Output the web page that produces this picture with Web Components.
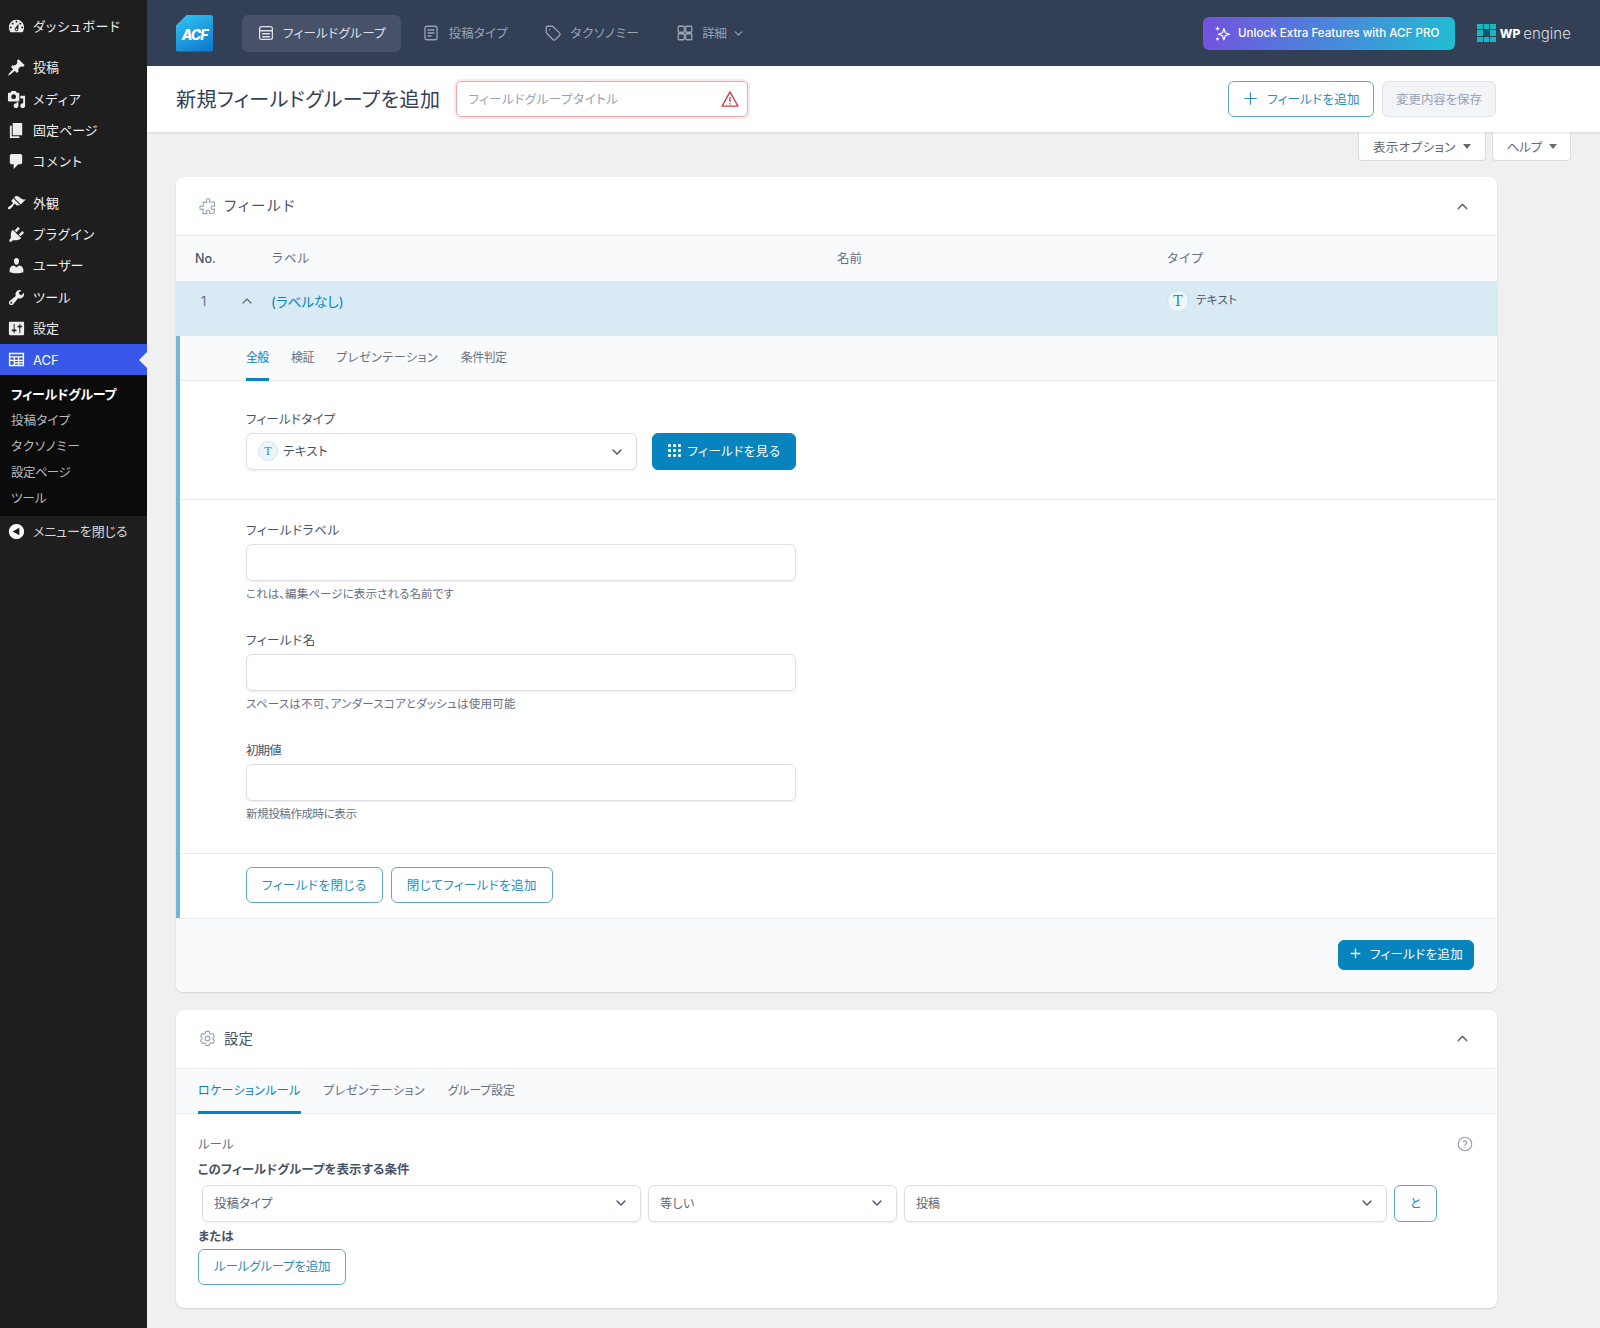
<!DOCTYPE html>
<html lang="ja">
<head>
<meta charset="utf-8">
<title>新規フィールドグループを追加</title>
<style>
  html, body { margin: 0; padding: 0; background: #f0f0f0; }
  body {
    font-family: "Inter", "Noto Sans CJK JP", sans-serif;
    font-size: 13px;
    font-feature-settings: "palt";
    color: #344054;
    height: 1328px;
    overflow: hidden;
  }
</style>
</head>
<body>
<wp-page>
  <wp-sidebar slot="side"></wp-sidebar>

  <acf-topbar></acf-topbar>
  <acf-titlebar></acf-titlebar>
  <screen-meta></screen-meta>

  <acf-card icon="puzzle" heading="フィールド" ls="2">
    <field-table></field-table>
  </acf-card>

  <acf-card icon="gear" heading="設定" class="second">
    <settings-panel></settings-panel>
  </acf-card>
</wp-page>

<script>
const ICONS = {
  dashboard: 'M3.76 16h12.48c1.1-1.37 1.76-3.11 1.76-5 0-4.42-3.58-8-8-8s-8 3.58-8 8c0 1.89.66 3.63 1.76 5zM10 4c.55 0 1 .45 1 1s-.45 1-1 1-1-.45-1-1 .45-1 1-1zM6 6c.55 0 1 .45 1 1s-.45 1-1 1-1-.45-1-1 .45-1 1-1zm8 0c.55 0 1 .45 1 1s-.45 1-1 1-1-.45-1-1 .45-1 1-1zm-5.37 5.55L12 7v6c0 1.1-.9 2-2 2s-2-.9-2-2c0-.57.24-1.08.63-1.45zM4 10c.55 0 1 .45 1 1s-.45 1-1 1-1-.45-1-1 .45-1 1-1zm12 0c.55 0 1 .45 1 1s-.45 1-1 1-1-.45-1-1 .45-1 1-1zm-5 3c0-.55-.45-1-1-1s-1 .45-1 1 .45 1 1 1 1-.45 1-1z',
  post: 'M10.44 3.02l1.82-1.82 6.36 6.35-1.83 1.82c-1.05-.68-2.48-.57-3.41.36l-.75.75c-.92.93-1.04 2.35-.35 3.41l-1.83 1.82-2.41-2.41-2.8 2.79c-.42.42-3.38 2.71-3.8 2.29s1.86-3.39 2.28-3.81l2.79-2.79L4.1 9.36l1.83-1.82c1.05.69 2.48.57 3.4-.36l.75-.75c.93-.92 1.05-2.35.36-3.41z',
  media: 'M13 11V4c0-.55-.45-1-1-1h-1.67L9 1H5L3.67 3H2c-.55 0-1 .45-1 1v7c0 .55.45 1 1 1h10c.55 0 1-.45 1-1zM7 4.5c1.38 0 2.5 1.12 2.5 2.5S8.38 9.5 7 9.5 4.5 8.38 4.5 7 5.62 4.5 7 4.5zM14 6h5v10.5c0 1.38-1.12 2.5-2.5 2.5S14 17.88 14 16.5s1.12-2.5 2.5-2.5c.17 0 .34.02.5.05V9h-3V6zm-4 8.05V13h2v3.5c0 1.38-1.12 2.5-2.5 2.5S7 17.88 7 16.5 8.12 14 9.5 14c.17 0 .34.02.5.05z',
  page: 'M6 15V2h10v13H6zm-1 1h8v2H3V5h2v11z',
  comment: 'M5 2h9c1.1 0 2 .9 2 2v7c0 1.1-.9 2-2 2h-2l-5 5v-5H5c-1.1 0-2-.9-2-2V4c0-1.1.9-2 2-2z',
  brush: 'M14.48 11.06L7.41 3.99l1.5-1.5c.5-.56 2.3-.47 3.51.32 1.21.8 1.43 1.28 2.91 2.1 1.18.64 2.45 1.26 4.45.85zm-.71.71L6.7 4.7 4.93 6.47c-.39.39-.39 1.02 0 1.41l1.06 1.06c.39.39.39 1.03 0 1.42-.6.6-1.43 1.11-2.21 1.69-.35.26-.7.53-1.01.84C1.43 13.23.4 14.91 1.2 15.7c.79.8 2.47-.23 3.83-1.59.31-.31.58-.66.85-1.02.57-.78 1.08-1.61 1.69-2.21.39-.39 1.02-.39 1.41 0l1.06 1.06c.39.39 1.02.39 1.41 0z',
  plugin: 'M13.11 4.36L9.87 7.6 8 5.73l3.24-3.24c.35-.34 1.05-.2 1.56.32.52.51.66 1.21.31 1.55zm-8 1.77l.91-1.12 9.01 9.01-1.19.84c-.71.71-2.63 1.16-3.82 1.16H6.14L4.9 17.26c-.59.59-1.54.59-2.12 0-.59-.58-.59-1.53 0-2.12l1.24-1.24v-3.88c0-1.13.4-3.19 1.09-3.89zm7.26 3.97l3.24-3.24c.34-.35 1.04-.21 1.55.31.52.51.66 1.21.31 1.55l-3.24 3.25z',
  user: 'M10 9.25c-2.27 0-2.73-3.44-2.73-3.44C7 4.02 7.82 2 9.97 2c2.16 0 2.98 2.02 2.71 3.81 0 0-.41 3.44-2.68 3.44zm0 2.57L12.72 10c2.39 0 4.52 2.33 4.52 4.53v2.49s-3.65 1.13-7.24 1.13c-3.65 0-7.24-1.13-7.24-1.13v-2.49c0-2.25 1.94-4.48 4.47-4.48z',
  tools: 'M16.68 9.77c-1.34 1.34-3.3 1.67-4.95.99l-5.41 6.52c-.99.99-2.59.99-3.58 0s-.99-2.59 0-3.57l6.52-5.42c-.68-1.65-.35-3.61.99-4.95 1.28-1.28 3.12-1.62 4.72-1.06l-2.89 2.89 2.82 2.82 2.86-2.87c.53 1.58.18 3.39-1.08 4.65zM3.81 16.21c.4.39 1.04.39 1.43 0 .4-.4.4-1.04 0-1.43-.39-.4-1.03-.4-1.43 0-.39.39-.39 1.03 0 1.43z',
  settings: 'M18 16V4c0-.55-.45-1-1-1H3c-.55 0-1 .45-1 1v12c0 .55.45 1 1 1h14c.55 0 1-.45 1-1zM8 11h1c.55 0 1 .45 1 1s-.45 1-1 1H8v1.5c0 .28-.22.5-.5.5s-.5-.22-.5-.5V13H6c-.55 0-1-.45-1-1s.45-1 1-1h1V5.5c0-.28.22-.5.5-.5s.5.22.5.5V11zm5-2h-1c-.55 0-1-.45-1-1s.45-1 1-1h1V5.5c0-.28.22-.5.5-.5s.5.22.5.5V7h1c.55 0 1 .45 1 1s-.45 1-1 1h-1v5.5c0 .28-.22.5-.5.5s-.5-.22-.5-.5V9z',
  table: 'M2 3h16v14H2zM3.5 4.5v2.2h13V4.5zM3.5 8v2.2h3.6V8zM8.4 8v2.2h3.2V8zM12.9 8v2.2h3.6V8zM3.5 11.5v4h3.6v-4zM8.4 11.5v1.4h3.2v-1.4zM8.4 14.1v1.4h3.2v-1.4zM12.9 11.5v1.4h3.6v-1.4zM12.9 14.1v1.4h3.6v-1.4z',
  collapse: 'M18 10c0-4.42-3.58-8-8-8s-8 3.58-8 8 3.58 8 8 8 8-3.58 8-8zm-5 4l-7-4 7-4v8z'
};

// stroke icons on a 24 box
const LINES = {
  puzzle: 'M14.25 6.087c0-.355.186-.676.401-.959.221-.29.349-.634.349-1.003 0-1.036-1.007-1.875-2.25-1.875s-2.25.84-2.25 1.875c0 .369.128.713.349 1.003.215.283.401.604.401.959a.64.64 0 01-.657.643 48.39 48.39 0 01-4.163-.3c.186 1.613.293 3.25.315 4.907a.656.656 0 01-.658.663c-.355 0-.676-.186-.959-.401a1.647 1.647 0 00-1.003-.349c-1.036 0-1.875 1.007-1.875 2.25s.84 2.25 1.875 2.25c.369 0 .713-.128 1.003-.349.283-.215.604-.401.959-.401.31 0 .555.26.532.57a48.039 48.039 0 01-.642 5.056c1.518.19 3.058.309 4.616.354a.64.64 0 00.657-.643c0-.355-.186-.676-.401-.959a1.647 1.647 0 01-.349-1.003c0-1.035 1.008-1.875 2.25-1.875 1.243 0 2.25.84 2.25 1.875 0 .369-.128.713-.349 1.003-.215.283-.4.604-.4.959 0 .333.277.599.61.58a48.1 48.1 0 005.427-.63 48.05 48.05 0 00.582-4.717.532.532 0 00-.533-.57c-.355 0-.676.186-.959.401-.29.221-.634.349-1.003.349-1.035 0-1.875-1.007-1.875-2.25s.84-2.25 1.875-2.25c.37 0 .713.128 1.003.349.283.215.604.401.96.401a.656.656 0 00.658-.663 48.422 48.422 0 00-.37-5.36c-1.886.342-3.81.574-5.766.689a.578.578 0 01-.61-.58z',
  gear: 'M9.594 3.94c.09-.542.56-.94 1.11-.94h2.593c.55 0 1.02.398 1.11.94l.213 1.281c.063.374.313.686.645.87.074.04.147.083.22.127.324.196.72.257 1.075.124l1.217-.456a1.125 1.125 0 011.37.49l1.296 2.247a1.125 1.125 0 01-.26 1.431l-1.003.827c-.293.24-.438.613-.431.992a6.759 6.759 0 010 .255c-.007.378.138.75.43.99l1.005.828c.424.35.534.954.26 1.43l-1.298 2.247a1.125 1.125 0 01-1.369.491l-1.217-.456c-.355-.133-.75-.072-1.076.124a6.57 6.57 0 01-.22.128c-.331.183-.581.495-.644.869l-.213 1.28c-.09.543-.56.941-1.11.941h-2.594c-.55 0-1.02-.398-1.11-.94l-.213-1.281c-.062-.374-.312-.686-.644-.87a6.52 6.52 0 01-.22-.127c-.325-.196-.72-.257-1.076-.124l-1.217.456a1.125 1.125 0 01-1.369-.49l-1.297-2.247a1.125 1.125 0 01.26-1.431l1.004-.827c.292-.24.437-.613.43-.992a6.932 6.932 0 010-.255c.007-.378-.138-.75-.43-.99l-1.004-.828a1.125 1.125 0 01-.26-1.43l1.297-2.247a1.125 1.125 0 011.37-.491l1.216.456c.356.133.751.072 1.076-.124.072-.044.146-.087.22-.128.332-.183.582-.495.644-.869l.214-1.281zM15 12a3 3 0 11-6 0 3 3 0 016 0z',
  groups: 'M6 3.5h12A2.5 2.5 0 0120.5 6v12a2.5 2.5 0 01-2.5 2.5H6A2.5 2.5 0 013.5 18V6A2.5 2.5 0 016 3.5zM3.5 9h17M7.5 13h9M7.5 17h9',
  doc: 'M6.5 3h11A2.5 2.5 0 0120 5.5v13a2.5 2.5 0 01-2.5 2.5h-11A2.5 2.5 0 014 18.5v-13A2.5 2.5 0 016.5 3zM8 8h8M8 12h8M8 16h4',
  tag: 'M3 4.5A1.5 1.5 0 014.5 3h6.4c.5 0 1 .2 1.4.6l8.6 8.6a2 2 0 010 2.8l-5.9 5.9a2 2 0 01-2.8 0l-8.6-8.6c-.4-.4-.6-.9-.6-1.4zM7.5 7.5h.01',
  grid: 'M4 3h6a1 1 0 011 1v6a1 1 0 01-1 1H4a1 1 0 01-1-1V4a1 1 0 011-1zM14 3h6a1 1 0 011 1v6a1 1 0 01-1 1h-6a1 1 0 01-1-1V4a1 1 0 011-1zM4 13h6a1 1 0 011 1v6a1 1 0 01-1 1H4a1 1 0 01-1-1v-6a1 1 0 011-1zM14 13h6a1 1 0 011 1v6a1 1 0 01-1 1h-6a1 1 0 01-1-1v-6a1 1 0 011-1z',
  down: 'M6 9l6 6 6-6',
  up: 'M6 15l6-6 6 6',
  plus: 'M12 4v16M4 12h16',
  warn: 'M12 3.5L2.5 20.5h19zM12 10v5M12 17.6v.4',
  help: 'M12 21a9 9 0 100-18 9 9 0 000 18zM9.6 9.5a2.5 2.5 0 014.8.8c0 1.6-2.4 2-2.4 3.4M12 16.8v.2',
  spark: 'M14 5l2 6 6 2-6 2-2 6-2-6-6-2 6-2zM5 3v4M3 5h4M5 18v3M3.5 19.5h3'
};

class WpIcon extends HTMLElement {
  connectedCallback() {
    const name = this.getAttribute('name');
    const size = this.getAttribute('size') || 20;
    const sw = this.getAttribute('weight') || 1.7;
    const body = LINES[name]
      ? `<svg viewBox="0 0 24 24" width="${size}" height="${size}" fill="none" stroke="currentColor" stroke-width="${sw}" stroke-linecap="round" stroke-linejoin="round"><path d="${LINES[name]}"/></svg>`
      : `<svg viewBox="0 0 20 20" width="${size}" height="${size}" fill="currentColor"><path fill-rule="evenodd" d="${ICONS[name]}"/></svg>`;
    this.attachShadow({ mode: 'open' }).innerHTML = `
      <style>
        :host { display: inline-flex; flex: none; line-height: 0; }
      </style>${body}`;
  }
}
customElements.define('wp-icon', WpIcon);

class WpPage extends HTMLElement {
  constructor() {
    super();
    this.attachShadow({ mode: 'open' }).innerHTML = `
      <style>
        :host { display: flex; align-items: stretch; height: 1328px; }
        .side { flex: 0 0 147px; background: #1e1e1e; }
        main { flex: 1; min-width: 0; }
      </style>
      <div class="side"><slot name="side"></slot></div>
      <main><slot></slot></main>`;
  }
}
customElements.define('wp-page', WpPage);

class WpSidebar extends HTMLElement {
  connectedCallback() {
    const item = (icon, text, ls = 0) => `
      <a class="item"><wp-icon name="${icon}" size="19"></wp-icon><span style="letter-spacing:${ls}px">${text}</span></a>`;
    this.attachShadow({ mode: 'open' }).innerHTML = `
      <style>
        :host { display: block; padding-top: 10.5px; color: #eceded; }
        .group { margin-bottom: 10.5px; }
        .item {
          display: flex; align-items: center; height: 31.25px;
          padding-left: 7px; gap: 7px; font-size: 13px; position: relative;
        }
        .item span { padding-bottom: 2px; }
        .current { background: #3858e9; color: #fff; }
        .current span { padding-bottom: 0; }
        .current::after {
          content: ""; position: absolute; right: 0; top: 50%; margin-top: -8px;
          border: 8px solid transparent; border-right-color: #f0f0f0; border-left: 0;
        }
        .sub { background: #0b0b0b; padding: 6px 0 3px; margin-bottom: 0; color: #b9bbbd; font-size: 12.5px; }
        .sub div { height: 26.25px; line-height: 26.25px; padding-left: 11px; }
        .sub .on { color: #fff; font-weight: 700; font-size: 13px; letter-spacing: -.2px; }
        .collapse { color: #d6d7d8; }
        .collapse span { padding-bottom: 1px; }
        .collapse wp-icon { color: #fff; }
      </style>
      <div class="group">${item('dashboard', 'ダッシュボード', 1)}</div>
      <div class="group">
        ${item('post', '投稿')}${item('media', 'メディア', 1)}${item('page', '固定ページ')}${item('comment', 'コメント', 1.2)}
      </div>
      <div>
        ${item('brush', '外観')}${item('plugin', 'プラグイン', .8)}${item('user', 'ユーザー')}${item('tools', 'ツール', .3)}${item('settings', '設定')}
        <a class="item current"><wp-icon name="table" size="19"></wp-icon><span>ACF</span></a>
      </div>
      <div class="sub">
        <div class="on">フィールドグループ</div>
        <div style="letter-spacing:.2px">投稿タイプ</div>
        <div style="letter-spacing:.85px">タクソノミー</div>
        <div style="letter-spacing:-.6px">設定ページ</div>
        <div>ツール</div>
      </div>
      <div class="collapse">${item('collapse', 'メニューを閉じる', -.1)}</div>`;
  }
}
customElements.define('wp-sidebar', WpSidebar);

class AcfTopbar extends HTMLElement {
  constructor() {
    super();
    this.attachShadow({ mode: 'open' }).innerHTML = `
      <style>
        :host {
          display: flex; align-items: center; height: 66px; background: #333f55;
          padding: 0 30px 0 29px; box-sizing: border-box;
        }
        .logo {
          width: 37px; height: 37px; box-sizing: border-box; margin-right: 29px;
          background: linear-gradient(150deg, #33c6f2, #0b74cc);
          clip-path: polygon(30% 0, 100% 0, 100% 100%, 0 100%, 0 30%);
          border-radius: 2px;
          color: #fff; font: italic 800 14px "Inter", sans-serif; letter-spacing: -1px;
          display: flex; align-items: center; justify-content: center; padding-top: 3px;
        }
        nav { display: flex; align-items: center; gap: 6.5px; flex: 1; }
        .tab {
          display: flex; align-items: center; gap: 8px; height: 37px; padding: 0 15px;
          border-radius: 6px; color: #99a3b3; font-size: 12.5px;
        }
        .tab span { padding-bottom: 2px; }
        .tab.on { background: #475268; color: #dde1e7; }
        .more { margin-left: -3px; }
        .pro {
          display: flex; align-items: center; gap: 7px; width: 252px; height: 33px;
          box-sizing: border-box; padding-left: 11px; border-radius: 6px; color: #fff;
          font-size: 11.6px; font-weight: 500; margin-right: 22px;
          background: linear-gradient(110deg, #7550e0 0%, #4a86db 50%, #1fbfd2 100%);
        }
        .wpe { display: flex; align-items: center; color: #fff; width: 93px; }
        .tiles {
          display: grid; grid-template-columns: repeat(3, 5.6px); grid-auto-rows: 5.6px; gap: 1px;
          margin-right: 4px;
        }
        .tiles i { background: #19b7c4; }
        .tiles i.c { background: #0f5a68; }
        .wp { font: 800 12px "Inter", sans-serif; letter-spacing: 0; margin-right: 3px; }
        .en { font: 300 15px "Inter", sans-serif; color: #d8dce2; letter-spacing: 0; }
      </style>
      <div class="logo">ACF</div>
      <nav>
        <div class="tab on"><wp-icon name="groups" size="18"></wp-icon><span style="letter-spacing:.35px">フィールドグループ</span></div>
        <div class="tab"><wp-icon name="doc" size="18"></wp-icon><span style="letter-spacing:.2px">投稿タイプ</span></div>
        <div class="tab"><wp-icon name="tag" size="18"></wp-icon><span style="letter-spacing:.8px">タクソノミー</span></div>
        <div class="tab"><wp-icon name="grid" size="18"></wp-icon><span style="letter-spacing:-.4px">詳細</span><wp-icon class="more" name="down" size="13" weight="2"></wp-icon></div>
      </nav>
      <div class="pro"><wp-icon name="spark" size="17"></wp-icon><span>Unlock Extra Features with ACF PRO</span></div>
      <div class="wpe">
        <div class="tiles"><i></i><i></i><i></i><i></i><i class="c"></i><i></i><i></i><i></i><i></i></div>
        <span class="wp">WP</span><span class="en">engine</span>
      </div>`;
  }
}
customElements.define('acf-topbar', AcfTopbar);

class AcfButton extends HTMLElement {
  constructor() {
    super();
    this.attachShadow({ mode: 'open' }).innerHTML = `
      <style>
        :host {
          display: inline-flex; align-items: center; justify-content: center; gap: 8px;
          height: 36px; box-sizing: border-box; padding: 0 15px 2px; border-radius: 6px;
          border: 1px solid #5fa8cd; background: #fff; color: #2a8bbd; font-size: 12.5px;
          white-space: nowrap; flex: none;
        }
        :host([kind="primary"]) { background: #0783be; border-color: #0783be; color: #fff; }
        :host([kind="off"]) { background: #f2f4f7; border-color: #dfe2e8; color: #98a2b3; }
      </style>
      <slot></slot>`;
  }
}
customElements.define('acf-button', AcfButton);

class AcfTitlebar extends HTMLElement {
  constructor() {
    super();
    this.attachShadow({ mode: 'open' }).innerHTML = `
      <style>
        :host {
          display: flex; align-items: center; height: 66px; box-sizing: border-box;
          background: #fff; padding: 0 104px 0 29px; box-shadow: 0 1px 2px rgba(16,24,40,.12);
          position: relative;
        }
        h1 { margin: 0 16px 2px 0; font-size: 20px; font-weight: 400; color: #344054; white-space: nowrap; letter-spacing: .44px; }
        .title {
          display: flex; align-items: center; justify-content: space-between;
          width: 292px; height: 36px; box-sizing: border-box; padding: 0 7px 0 11px;
          border: 1px solid #eba9ab; border-radius: 5px; box-shadow: 0 0 0 2px #fce9e9;
          color: #98a2b3; font-size: 12.5px;
        }
        .title span { letter-spacing: .55px; padding-bottom: 2px; }
        .warn { color: #c9434e; }
        .end { margin-left: auto; display: flex; gap: 8px; }
        .add { width: 146px; padding: 0 0 2px; gap: 8px; letter-spacing: .3px; }
        .save { width: 114px; padding: 0 0 2px; letter-spacing: -.1px; }
      </style>
      <h1>新規フィールドグループを追加</h1>
      <div class="title"><span>フィールドグループタイトル</span><wp-icon class="warn" name="warn" size="20"></wp-icon></div>
      <div class="end">
        <acf-button class="add"><wp-icon name="plus" size="17"></wp-icon>フィールドを追加</acf-button>
        <acf-button class="save" kind="off">変更内容を保存</acf-button>
      </div>`;
  }
}
customElements.define('acf-titlebar', AcfTitlebar);

class ScreenMeta extends HTMLElement {
  constructor() {
    super();
    this.attachShadow({ mode: 'open' }).innerHTML = `
      <style>
        :host { display: flex; justify-content: flex-end; gap: 6px; height: 29px; padding-right: 29px; }
        div {
          display: flex; align-items: center; gap: 7px; box-sizing: border-box; padding: 0 14px;
          height: 29px; background: #fff; border: 1px solid #dcdcde; border-top: 0;
          border-radius: 0 0 4px 4px; color: #646970; font-size: 12.5px;
        }
        .opt { letter-spacing: .4px; }
        .hlp { padding: 0 13px 0 14px; letter-spacing: -.2px; }
        i { width: 0; height: 0; border: 4px solid transparent; border-top: 5px solid #646970; border-bottom: 0; }
      </style>
      <div class="opt">表示オプション<i></i></div>
      <div class="hlp">ヘルプ<i></i></div>`;
  }
}
customElements.define('screen-meta', ScreenMeta);

class AcfCard extends HTMLElement {
  connectedCallback() {
    this.attachShadow({ mode: 'open' }).innerHTML = `
      <style>
        :host {
          display: block; margin: 16px 103px 0 29px; background: #fff; border-radius: 8px;
          box-shadow: 0 1px 2px rgba(16,24,40,.14); overflow: hidden;
        }
        :host(.second) { margin-top: 17.5px; }
        header {
          display: flex; align-items: center; height: 58px; padding: 0 26px 0 22px; gap: 7px;
          border-bottom: 1px solid #eaecf0; color: #475467; font-size: 14.5px;
        }
        .ttl { padding-bottom: 3px; letter-spacing: ${this.getAttribute('ls') || 0}px; }
        .ic { color: #98a2b3; }
        .chev { margin-left: auto; color: #667085; }
      </style>
      <header>
        <wp-icon class="ic" name="${this.getAttribute('icon')}" size="19" weight="1.4"></wp-icon>
        <span class="ttl">${this.getAttribute('heading')}</span>
        <wp-icon class="chev" name="up" size="17" weight="2"></wp-icon>
      </header>
      <slot></slot>`;
  }
}
customElements.define('acf-card', AcfCard);

class AcfTabs extends HTMLElement {
  connectedCallback() {
    // items: name or name~letterspacing, split by |
    const names = this.getAttribute('items').split('|').map((s) => s.split('~'));
    this.attachShadow({ mode: 'open' }).innerHTML = `
      <style>
        :host {
          display: flex; gap: 22.5px; height: 45px; box-sizing: border-box; background: #f9fafb;
          border-bottom: 1px solid #eaecf0; font-size: 12px; color: #667085;
        }
        span { display: flex; align-items: center; height: 45px; box-sizing: border-box; border-bottom: 3px solid transparent; padding-bottom: 1px; }
        .on { color: #0783be; border-bottom-color: #0783be; }
      </style>
      ${names.map(([n, ls], i) => `<span class="${i === 0 ? 'on' : ''}" style="letter-spacing:${ls || 0}px">${n}</span>`).join('')}`;
  }
}
customElements.define('acf-tabs', AcfTabs);

class AcfSelect extends HTMLElement {
  constructor() {
    super();
    this.attachShadow({ mode: 'open' }).innerHTML = `
      <style>
        :host {
          display: flex; align-items: center; justify-content: space-between; height: 37px;
          box-sizing: border-box; padding: 0 11px 0 11px; background: #fff; border-radius: 6px;
          border: 1px solid #dcdfe5; box-shadow: 0 1px 2px rgba(16,24,40,.08);
          color: #475467; font-size: 12.5px;
        }
        span { padding-bottom: 2px; }
        wp-icon { color: #475467; }
      </style>
      <span><slot></slot></span>
      <wp-icon name="down" size="16" weight="2"></wp-icon>`;
  }
}
customElements.define('acf-select', AcfSelect);

class TypeBadge extends HTMLElement {
  constructor() {
    super();
    this.attachShadow({ mode: 'open' }).innerHTML = `
      <style>
        :host {
          display: inline-flex; align-items: center; justify-content: center; flex: none;
          width: 20px; height: 20px; box-sizing: border-box; border-radius: 50%;
          background: #ebf5fa; border: 1px solid #cfe3ee; color: #2a8bbd;
          font: 12px/1 "Liberation Serif", serif;
        }
      </style>T`;
  }
}
customElements.define('type-badge', TypeBadge);

class AcfField extends HTMLElement {
  connectedCallback() {
    this.attachShadow({ mode: 'open' }).innerHTML = `
      <style>
        :host { display: block; width: 550px; }
        label {
          display: block; line-height: 16px; font-size: 12.5px; color: #475467; margin-bottom: 5px;
          letter-spacing: ${this.getAttribute('ls1') || 0}px;
        }
        .input {
          height: 37px; box-sizing: border-box; border: 1px solid #dcdfe5; border-radius: 6px;
          background: #fff; box-shadow: 0 1px 2px rgba(16,24,40,.08);
        }
        small {
          display: block; line-height: 16px; margin-top: 5.5px; font-size: 11.5px; color: #667085;
          letter-spacing: ${this.getAttribute('ls2') || 0}px;
        }
      </style>
      <label>${this.getAttribute('label')}</label>
      <div class="input"></div>
      <small>${this.getAttribute('hint')}</small>`;
  }
}
customElements.define('acf-field', AcfField);

class FieldTable extends HTMLElement {
  constructor() {
    super();
    this.attachShadow({ mode: 'open' }).innerHTML = `
      <style>
        :host { display: block; }
        .cols { display: grid; grid-template-columns: 76px 566px 330px 1fr; padding-left: 19px; }
        .head { height: 45px; align-items: center; background: #f9fafb; color: #667085; font-size: 12.5px; }
        .head b { font-weight: 500; color: #475467; }
        .head span { padding-bottom: 2px; }
        .head .l { letter-spacing: 1px; margin-left: 1px; }
        .head .t { letter-spacing: 1.3px; }
        .row { height: 55px; background: #d8eaf4; align-items: start; padding-top: 10px; box-sizing: border-box; }
        .row > div { display: flex; align-items: center; height: 20px; }
        .num { justify-content: flex-start; color: #667085; gap: 33px; padding-left: 6px; position: relative; }
        .num wp-icon { color: #667085; }
        .lab { color: #0783be; font-size: 13.5px; padding-bottom: 6px; }
        .typ { gap: 7px; font-size: 11.5px; color: #475467; }
        .typ span { padding-bottom: 4px; letter-spacing: .3px; }
        .typ type-badge { width: 22px; height: 22px; font-size: 16px; background: #edf6fb; }
        .body { border-left: 4px solid #72b7d9; }
        .tabs { padding-left: 66px; }
        .sec { padding-left: 66px; border-bottom: 1px solid #eaecf0; }
        .s1 { padding-top: 31px; padding-bottom: 29px; }
        .s1 label { display: block; line-height: 16px; font-size: 12.5px; color: #475467; margin-bottom: 5px; letter-spacing: .3px; }
        .line { display: flex; gap: 15px; }
        .line acf-select { width: 391px; box-sizing: border-box; }
        .inner { display: flex; align-items: center; gap: 5px; letter-spacing: .4px; }
        .browse { width: 144px; height: 37px; padding: 0 0 2px; gap: 7px; letter-spacing: .5px; }
        .s2 { padding-top: 22.5px; padding-bottom: 31px; display: flex; flex-direction: column; gap: 30.5px; }
        .s3 { padding-top: 13px; padding-bottom: 15px; display: flex; gap: 8px; border-bottom: 0; }
        .c1 { letter-spacing: .55px; }
        .c2 { letter-spacing: .45px; }
        .foot {
          height: 74px; box-sizing: border-box; background: #f9fafb; border-top: 1px solid #eaecf0;
          display: flex; justify-content: flex-end; padding: 20.5px 23px 0 0;
        }
        .foot acf-button { height: 30px; width: 136px; padding: 0 0 2px; letter-spacing: .35px; }
        .dots { display: grid; grid-template-columns: repeat(3, 3px); grid-auto-rows: 3px; gap: 2px; }
        .dots i { background: #fff; border-radius: 1px; }
      </style>
      <div class="cols head"><b>No.</b><span class="l">ラベル</span><span>名前</span><span class="t">タイプ</span></div>
      <div class="cols row">
        <div class="num">1<wp-icon name="up" size="16" weight="2"></wp-icon></div>
        <div class="lab">(ラベルなし)</div>
        <div></div>
        <div class="typ"><type-badge></type-badge><span>テキスト</span></div>
      </div>
      <div class="body">
        <acf-tabs class="tabs" items="全般~-.7|検証~-.7|プレゼンテーション~.55|条件判定~-.6"></acf-tabs>
        <div class="sec s1">
          <label>フィールドタイプ</label>
          <div class="line">
            <acf-select><span class="inner"><type-badge></type-badge>テキスト</span></acf-select>
            <acf-button class="browse" kind="primary"><span class="dots"><i></i><i></i><i></i><i></i><i></i><i></i><i></i><i></i><i></i></span>フィールドを見る</acf-button>
          </div>
        </div>
        <div class="sec s2">
          <acf-field label="フィールドラベル" ls1=".6" ls2=".1" hint="これは、編集ページに表示される名前です"></acf-field>
          <acf-field label="フィールド名" ls1=".6" ls2=".25" hint="スペースは不可、アンダースコアとダッシュは使用可能"></acf-field>
          <acf-field label="初期値" ls1="-.9" ls2="-.4" hint="新規投稿作成時に表示"></acf-field>
        </div>
        <div class="sec s3">
          <acf-button class="c1">フィールドを閉じる</acf-button>
          <acf-button class="c2">閉じてフィールドを追加</acf-button>
        </div>
      </div>
      <div class="foot"><acf-button kind="primary"><wp-icon name="plus" size="13" weight="2.4"></wp-icon>フィールドを追加</acf-button></div>`;
  }
}
customElements.define('field-table', FieldTable);

class SettingsPanel extends HTMLElement {
  constructor() {
    super();
    this.attachShadow({ mode: 'open' }).innerHTML = `
      <style>
        :host { display: block; }
        .tabs { padding-left: 22px; }
        .body { padding: 22px 23px 23px 22px; }
        .top { display: flex; justify-content: space-between; align-items: center; height: 16px; font-size: 12.5px; color: #667085; }
        .top wp-icon { color: #98a2b3; }
        .cond { line-height: 16px; margin-top: 10.5px; font-size: 12.5px; font-weight: 600; color: #475467; letter-spacing: .06px; }
        .rule { display: flex; gap: 7px; margin: 6.5px 0 0 4px; }
        .rule acf-select { color: #5a6577; }
        .and { width: 43px; height: 37px; padding: 0 0 2px; }
        .or { line-height: 16px; margin-top: 7.5px; font-size: 12.5px; font-weight: 600; color: #475467; }
        .add { margin-top: 3.5px; display: flex; letter-spacing: -.2px; }
        .small { font-size: 12px; }
      </style>
      <acf-tabs class="tabs" items="ロケーションルール~.35|プレゼンテーション~.55|グループ設定~-.2"></acf-tabs>
      <div class="body">
        <div class="top"><span>ルール</span><wp-icon name="help" size="18" weight="1.6"></wp-icon></div>
        <div class="cond">このフィールドグループを表示する条件</div>
        <div class="rule">
          <acf-select style="width:439px">投稿タイプ</acf-select>
          <acf-select class="small" style="width:249px;letter-spacing:.4px">等しい</acf-select>
          <acf-select class="small" style="width:483px">投稿</acf-select>
          <acf-button class="and">と</acf-button>
        </div>
        <div class="or">または</div>
        <div class="add"><acf-button>ルールグループを追加</acf-button></div>
      </div>`;
  }
}
customElements.define('settings-panel', SettingsPanel);
</script>
</body>
</html>
